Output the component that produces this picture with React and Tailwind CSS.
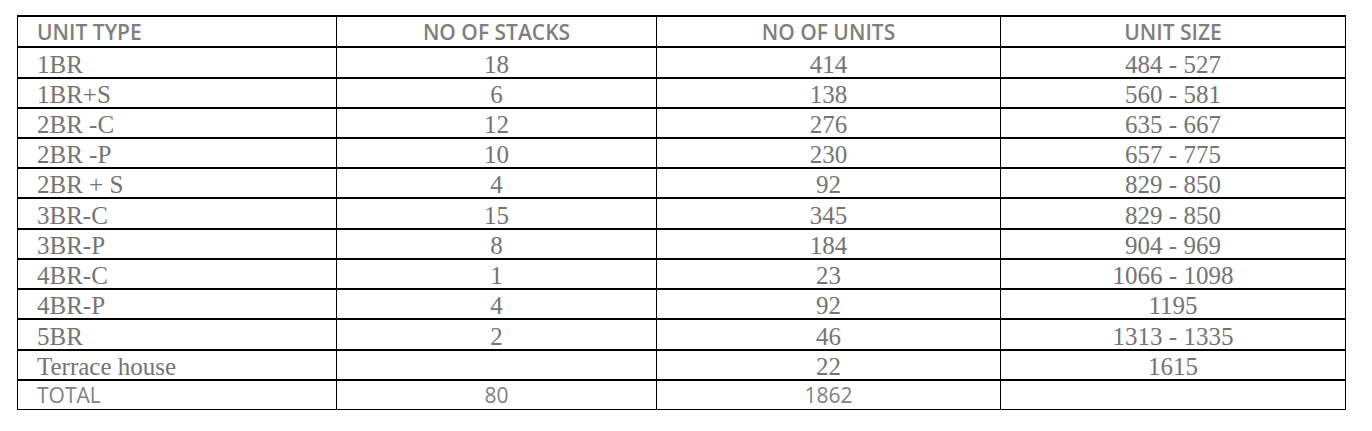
import React from "react";

const rows = [
    { type: "1BR", stacks: "18", units: "414", size: "484 - 527", h: "h-[31px]" },
    { type: "1BR+S", stacks: "6", units: "138", size: "560 - 581", h: "h-[30px]" },
    { type: "2BR -C", stacks: "12", units: "276", size: "635 - 667", h: "h-[30px]" },
    { type: "2BR -P", stacks: "10", units: "230", size: "657 - 775", h: "h-[30px]" },
    { type: "2BR + S", stacks: "4", units: "92", size: "829 - 850", h: "h-[30px]" },
    { type: "3BR-C", stacks: "15", units: "345", size: "829 - 850", h: "h-[31px]" },
    { type: "3BR-P", stacks: "8", units: "184", size: "904 - 969", h: "h-[30px]" },
    { type: "4BR-C", stacks: "1", units: "23", size: "1066 - 1098", h: "h-[30px]" },
    { type: "4BR-P", stacks: "4", units: "92", size: "1195", h: "h-[30px]" },
    { type: "5BR", stacks: "2", units: "46", size: "1313 - 1335", h: "h-[31px]" },
    { type: "Terrace house", stacks: "", units: "22", size: "1615", h: "h-[30px]" },
];

// body rows: serif, header + total: sans
const serif = "font-['Liberation_Serif',serif] text-[25px] leading-none pt-[3px] text-[#747474]";
const sans = "font-['Open_Sans',sans-serif] leading-none text-[#7f7f7f]";

const Row = ({ h, cells, font }) => (
    <div className={`grid grid-cols-[319px_320px_344px_345px] ${h} border-t-2 border-black`}>
        {cells.map((c, i) => (
            <div
                key={i}
                className={`flex items-center border-r border-black ${i === 0 ? "justify-start pl-[19px]" : "justify-center"} ${font}`}
            >
                {c}
            </div>
        ))}
    </div>
);

export default function App() {
    return (
        <div className="bg-white w-[1372px] h-[431px] pt-[15px] pl-[17px]">
            <div className="w-[1329px] border-l border-b border-black">
                <Row
                    h="h-[31px]"
                    font={`${sans} text-[21px] font-semibold pt-[1px]`}
                    cells={["UNIT TYPE", "NO OF STACKS", "NO OF UNITS", "UNIT SIZE"]}
                />
                {rows.map((r) => (
                    <Row key={r.type} h={r.h} font={serif} cells={[r.type, r.stacks, r.units, r.size]} />
                ))}
                <Row
                    h="h-[30px]"
                    font={`${sans} text-[21px] pt-[1px]`}
                    cells={["TOTAL", "80", "1862", ""]}
                />
            </div>
        </div>
    );
}
